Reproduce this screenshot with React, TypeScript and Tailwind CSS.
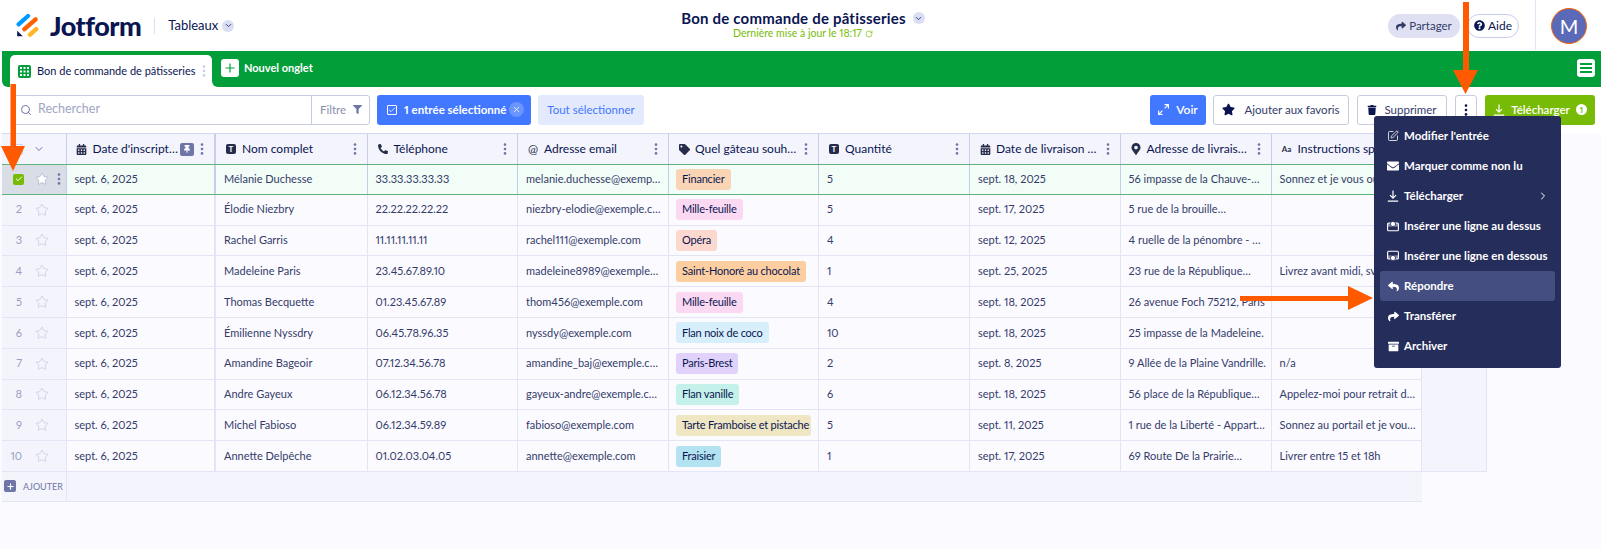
import type { ReactNode } from "react";
import { Star, Search, Check, X, ChevronDown, ChevronRight, SquarePen, Plus, RotateCw } from "lucide-react";
import {
  FaPhoneAlt,
  FaTag,
  FaMapMarkerAlt,
  FaStar,
  FaFilter,
  FaEnvelope,
  FaReply,
  FaShare,
  FaArchive,
  FaQuestionCircle,
  FaTrash,
  FaCalendarAlt,
  FaThumbtack,
} from "react-icons/fa";

const rowGrid = "grid grid-cols-[64.5px_149.5px_151.5px_150.5px_151px_150px_151px_150.5px_151px_150px]";

const Dots = ({ className = "" }: { className?: string }) => (
  <svg width="4" height="12" viewBox="0 0 4 12" className={className} fill="currentColor">
    <circle cx="2" cy="1.6" r="1.3" />
    <circle cx="2" cy="6" r="1.3" />
    <circle cx="2" cy="10.4" r="1.3" />
  </svg>
);

const DownloadIcon = ({ className = "" }: { className?: string }) => (
  <svg width="12" height="12" viewBox="0 0 12 12" className={className} fill="none" stroke="currentColor" strokeWidth="1.2">
    <path d="M6 0.5V8M3 5.2L6 8.2L9 5.2M0.8 11.2H11.2" />
  </svg>
);

const TBox = () => (
  <span className="w-[10px] h-[10px] rounded-[2px] bg-[#272c4a] text-white text-[8px] font-bold flex items-center justify-center leading-none">T</span>
);

const Cal = () => <FaCalendarAlt size={11} className="text-[#272c4a]" />;

const columns: { icon: ReactNode; label: string; pin?: boolean }[] = [
  { icon: <Cal />, label: "Date d'inscript…", pin: true },
  { icon: <TBox />, label: "Nom complet" },
  { icon: <FaPhoneAlt size={10} className="text-[#272c4a]" />, label: "Téléphone" },
  { icon: <span className="text-[12px] leading-none text-[#272c4a]">@</span>, label: "Adresse email" },
  { icon: <FaTag size={11} className="text-[#272c4a]" />, label: "Quel gâteau souh…" },
  { icon: <TBox />, label: "Quantité" },
  { icon: <Cal />, label: "Date de livraison …" },
  { icon: <FaMapMarkerAlt size={12} className="text-[#272c4a]" />, label: "Adresse de livrais…" },
  { icon: <span className="text-[8px] font-bold leading-none text-[#272c4a]">Aa</span>, label: "Instructions spéciales" },
];

type Row = [string, string, string, string, [string, string], string, string, string, string];

const rows: Row[] = [
  ["sept. 6, 2025", "Mélanie Duchesse", "33.33.33.33.33", "melanie.duchesse@exemp…", ["Financier", "bg-[#fad5b5]"], "5", "sept. 18, 2025", "56 impasse de la Chauve-…", "Sonnez et je vous ouvrirai"],
  ["sept. 6, 2025", "Élodie Niezbry", "22.22.22.22.22", "niezbry-elodie@exemple.c…", ["Mille-feuille", "bg-[#fcd9f3]"], "5", "sept. 17, 2025", "5 rue de la brouille…", ""],
  ["sept. 6, 2025", "Rachel Garris", "11.11.11.11.11", "rachel111@exemple.com", ["Opéra", "bg-[#fdd8cf]"], "4", "sept. 12, 2025", "4 ruelle de la pénombre - …", ""],
  ["sept. 6, 2025", "Madeleine Paris", "23.45.67.89.10", "madeleine8989@exemple…", ["Saint-Honoré au chocolat", "bg-[#fdcfa0]"], "1", "sept. 25, 2025", "23 rue de la République…", "Livrez avant midi, svp"],
  ["sept. 6, 2025", "Thomas Becquette", "01.23.45.67.89", "thom456@exemple.com", ["Mille-feuille", "bg-[#fcd9f3]"], "4", "sept. 18, 2025", "26 avenue Foch 75212, Paris", ""],
  ["sept. 6, 2025", "Émilienne Nyssdry", "06.45.78.96.35", "nyssdy@exemple.com", ["Flan noix de coco", "bg-[#d6effb]"], "10", "sept. 18, 2025", "25 impasse de la Madeleine.", ""],
  ["sept. 6, 2025", "Amandine Bageoir", "07.12.34.56.78", "amandine_baj@exemple.c…", ["Paris-Brest", "bg-[#e0d2fb]"], "2", "sept. 8, 2025", "9 Allée de la Plaine Vandrille.", "n/a"],
  ["sept. 6, 2025", "Andre Gayeux", "06.12.34.56.78", "gayeux-andre@exemple.c…", ["Flan vanille", "bg-[#c4f1e9]"], "6", "sept. 18, 2025", "56 place de la République…", "Appelez-moi pour retrait d…"],
  ["sept. 6, 2025", "Michel Fabioso", "06.12.34.59.89", "fabioso@exemple.com", ["Tarte Framboise et pistache", "bg-[#efe7c3]"], "5", "sept. 11, 2025", "1 rue de la Liberté - Appart…", "Sonnez au portail et je vou…"],
  ["sept. 6, 2025", "Annette Delpêche", "01.02.03.04.05", "annette@exemple.com", ["Fraisier", "bg-[#b3e2f0]"], "1", "sept. 17, 2025", "69 Route De la Prairie…", "Livrer entre 15 et 18h"],
];

const menu: { icon: ReactNode; label: string; more?: boolean; active?: boolean }[] = [
  { icon: <SquarePen size={12} strokeWidth={1.6} />, label: "Modifier l'entrée" },
  { icon: <FaEnvelope size={12} />, label: "Marquer comme non lu" },
  { icon: <DownloadIcon />, label: "Télécharger", more: true },
  {
    icon: (
      <svg width="12" height="12" viewBox="0 0 12 12" fill="none">
        <rect x="0.6" y="3" width="10.8" height="7.8" rx="1" stroke="currentColor" strokeWidth="1.1" />
        <rect x="1" y="3" width="10" height="3.6" fill="currentColor" opacity="0.45" />
        <circle cx="6" cy="4" r="2.6" fill="currentColor" stroke="#252d5b" strokeWidth="0.8" />
      </svg>
    ),
    label: "Insérer une ligne au dessus",
  },
  {
    icon: (
      <svg width="12" height="12" viewBox="0 0 12 12" fill="none">
        <rect x="0.6" y="1.2" width="10.8" height="7.8" rx="1" stroke="currentColor" strokeWidth="1.1" />
        <rect x="1" y="5.4" width="10" height="3.6" fill="currentColor" opacity="0.45" />
        <circle cx="6" cy="8" r="2.6" fill="currentColor" stroke="#252d5b" strokeWidth="0.8" />
      </svg>
    ),
    label: "Insérer une ligne en dessous",
  },
  { icon: <FaReply size={11} />, label: "Répondre", active: true },
  { icon: <FaShare size={11} />, label: "Transférer" },
  { icon: <FaArchive size={11} />, label: "Archiver" },
];

const Logo = () => (
  <svg width="24" height="24" viewBox="0 0 24 24" className="shrink-0">
    <path d="M3.6 10.4L13 2" stroke="#0099ff" strokeWidth="4.2" strokeLinecap="round" />
    <path d="M9.4 15.2L20.6 5.4" stroke="#ff6100" strokeWidth="4.4" strokeLinecap="round" />
    <path d="M15 20.6L21.2 15.2" stroke="#ffb629" strokeWidth="4.4" strokeLinecap="round" />
    <path d="M2.2 16.8V22.2H7.8Z" fill="#0a1551" />
  </svg>
);

const Header = () => (
  <header className="h-[51px] flex bg-white text-[#0a1551]">
    <div className="w-[258px] flex items-center pl-[15px]">
      <Logo />
      <span className="ml-[11px] text-[27px] font-black tracking-[-0.5px] leading-none">Jotform</span>
      <span className="ml-[13px] w-px h-[16px] bg-[#dadef3]" />
      <span className="ml-[13px] text-[13px]">Tableaux</span>
      <span className="ml-[4px] w-[12px] h-[12px] rounded-full bg-[#dadef3] flex items-center justify-center">
        <ChevronDown size={9} />
      </span>
    </div>
    <div className="flex-1 flex flex-col items-center pt-[9px]">
      <div className="flex items-center gap-[7px]">
        <span className="text-[15px] font-bold tracking-[0.2px] leading-[18px]">Bon de commande de pâtisseries</span>
        <span className="w-[12px] h-[12px] rounded-full bg-[#dadef3] flex items-center justify-center">
          <ChevronDown size={9} />
        </span>
      </div>
      <div className="flex items-center gap-[3px] text-[10.5px] leading-[13px] text-[#78bb07]">
        Dernière mise à jour le 18:17
        <RotateCw size={8} />
      </div>
    </div>
    <div className="w-[253px] flex items-center pl-[40px] text-[#343c6a]">
      <span className="w-[72px] h-[24px] rounded-full bg-[#dfe1f3] flex items-center justify-center gap-[3px] text-[11.5px]">
        <FaShare size={10} />
        Partager
      </span>
      <span className="ml-[7px] w-[52px] h-[24px] rounded-full bg-white border border-[#c8ccec] flex items-center justify-center gap-[3px] text-[12px] text-[#0a1551]">
        <FaQuestionCircle size={11} />
        Aide
      </span>
      <span className="ml-[16px] w-px h-[50px] self-start bg-[#e3e5f5]" />
      <span className="ml-[15px] w-[36px] h-[36px] rounded-full bg-[#5b6ab8] border border-[#ff6100] text-white text-[20px] flex items-center justify-center">M</span>
    </div>
  </header>
);

const TabBar = () => (
  <div className="h-[36px] flex pl-[2px]">
    <div className="w-[8px] bg-[#029e39] rounded-bl-[6px]" />
    <div className="w-[202px] bg-[#029e39] pt-[4px]">
      <div className="h-[32px] bg-white rounded-t-[5px] flex items-center pl-[8px] text-[#0a1551]">
        <svg width="13" height="13" viewBox="0 0 13 13" className="shrink-0 text-[#029e39]" fill="currentColor">
          <path d="M2 0H11A2 2 0 0 1 13 2V11A2 2 0 0 1 11 13H2A2 2 0 0 1 0 11V2A2 2 0 0 1 2 0ZM2 2V4H4V2ZM5.5 2V4H7.5V2ZM9 2V4H11V2ZM2 5.5V7.5H4V5.5ZM5.5 5.5V7.5H7.5V5.5ZM9 5.5V7.5H11V5.5ZM2 9V11H4V9ZM5.5 9V11H7.5V9ZM9 9V11H11V9Z" fillRule="evenodd" />
        </svg>
        <span className="ml-[6px] text-[11px] whitespace-nowrap">Bon de commande de pâtisseries</span>
        <Dots className="ml-[6px] text-[#c8ccec]" />
      </div>
    </div>
    <div className="flex-1 bg-[#029e39] rounded-bl-[6px] flex items-center pl-[9px] pr-[6px] pb-[2px]">
      <span className="w-[18px] h-[18px] rounded-[3px] bg-white flex items-center justify-center text-[#029e39]">
        <Plus size={14} strokeWidth={2} />
      </span>
      <span className="ml-[5px] text-[11px] font-bold text-white">Nouvel onglet</span>
      <span className="ml-auto w-[18px] h-[18px] rounded-[3px] bg-white flex flex-col items-center justify-center gap-[2px]">
        <span className="w-[12px] h-[2px] bg-[#029e39]" />
        <span className="w-[12px] h-[2px] bg-[#029e39]" />
        <span className="w-[12px] h-[2px] bg-[#029e39]" />
      </span>
    </div>
  </div>
);

const Toolbar = () => (
  <div className="h-[46px] bg-white flex items-center pl-[13px] pr-[6px] pb-[1px] text-[12.5px]">
    <div className="w-[357px] h-[30px] flex items-center bg-white border border-[#c8cce0] rounded-[3px]">
      <Search size={12} className="ml-[6px] text-[#6f76a7]" />
      <span className="ml-[6px] flex-1 text-[#a0a5c5]">Rechercher</span>
      <span className="w-[58px] h-full border-l border-[#c8cce0] flex items-center pl-[8px] gap-[7px] text-[11.5px] text-[#8a8fb0]">
        Filtre
        <FaFilter size={9} className="text-[#6f76a7]" />
      </span>
    </div>
    <div className="ml-[7px] w-[154px] h-[30px] rounded-[3px] bg-[#4277ff] text-white flex items-center pl-[10px] font-bold text-[11.5px]">
      <span className="w-[10px] h-[10px] border border-white rounded-[1px] flex items-center justify-center shrink-0">
        <Check className="w-[8px] h-[8px] shrink-0" strokeWidth={2.5} />
      </span>
      <span className="ml-[7px] whitespace-nowrap">1 entrée sélectionné</span>
      <span className="ml-[3px] w-[15px] h-[15px] rounded-full bg-[#6b95ff] flex items-center justify-center">
        <X size={9} />
      </span>
    </div>
    <div className="ml-[7px] w-[106px] h-[30px] rounded-[3px] bg-[#e3eafd] text-[#4277ff] text-[11.5px] flex items-center justify-center">Tout sélectionner</div>
    <div className="ml-auto w-[56px] h-[30px] rounded-[3px] bg-[#4277ff] text-white flex items-center justify-center gap-[7px] font-semibold text-[12px]">
      <svg width="11" height="11" viewBox="0 0 11 11" fill="none" stroke="currentColor" strokeWidth="1.1">
        <path d="M6.5 0.6H10.4V4.5M10.4 0.6L6.6 4.4M4.5 10.4H0.6V6.5M0.6 10.4L4.4 6.6" />
      </svg>
      Voir
    </div>
    <div className="ml-[7px] w-[136px] h-[30px] rounded-[3px] bg-white border border-[#c8cce0] text-[#343c6a] flex items-center justify-center gap-[9px] text-[11.5px]">
      <FaStar size={13} className="text-[#0a1551]" />
      Ajouter aux favoris
    </div>
    <div className="ml-[8px] w-[90px] h-[30px] rounded-[3px] bg-white border border-[#c8cce0] text-[#343c6a] flex items-center justify-center gap-[7px] text-[11.5px]">
      <FaTrash size={10} className="text-[#0a1551]" />
      Supprimer
    </div>
    <div className="ml-[8px] w-[22px] h-[30px] rounded-[3px] bg-white border border-[#c8cce0] flex items-center justify-center text-[#0a1551]">
      <Dots />
    </div>
    <div className="ml-[8px] w-[110px] h-[30px] rounded-[3px] bg-[#78bb07] text-white flex items-center justify-center gap-[6px] font-semibold text-[11.5px]">
      <DownloadIcon />
      Télécharger
      <span className="w-[11px] h-[11px] rounded-full bg-white text-[#78bb07] text-[8px] font-bold flex items-center justify-center">1</span>
    </div>
  </div>
);

const HeaderRow = () => (
  <div className={`${rowGrid} h-[31px] bg-[#f3f4fc] border-t border-[#d3d7ef] text-[#0a1551]`}>
    <div className="border-r border-[#c8cdea] flex items-center pl-[10px] gap-[10px]">
      <span className="w-[11px] h-[11px] bg-white border border-[#c8cdea] rounded-[2px]" />
      <ChevronDown size={12} className="text-[#6f76a7]" />
    </div>
    {columns.map((col, i) => (
      <div key={col.label} className={`flex items-center pl-[9px] pr-[10px] border-r ${i === 0 ? "border-r-2 border-[#c8cdea]" : "border-[#c8cdea]"} overflow-hidden`}>
        <span className="w-[12px] flex justify-center shrink-0">{col.icon}</span>
        <span className="ml-[5px] text-[12px] whitespace-nowrap">{col.label}</span>
        {col.pin && (
          <span className="ml-auto mr-[6px] w-[14px] h-[13px] rounded-[2px] bg-[#6f76a7] shrink-0 flex items-center justify-center text-white">
            <FaThumbtack size={8} />
          </span>
        )}
        <Dots className={`${col.pin ? "" : "ml-auto"} shrink-0 text-[#6f76a7]`} />
      </div>
    ))}
  </div>
);

const TableRow = ({ row, index }: { row: Row; index: number }) => {
  const selected = index === 0;
  const line = selected ? "border-[#c3cbe6]" : "border-[#e3e5f5]";
  return (
    <div
      className={`${rowGrid} h-[30.8px] border-b text-[11px] text-[#343c6a] ${
        selected ? "bg-[#f3fdf8] border-[#5fb37c] border-t" : "bg-[#fbfaff] border-[#e3e5f5]"
      }`}
    >
      <div className={`flex items-center border-r ${line} ${selected ? "bg-[#d8dde6]" : "bg-[#f3f4fc]"}`}>
        {selected ? (
          <>
            <span className="ml-[11px] w-[11px] h-[11px] rounded-[2px] bg-[#78bb07] flex items-center justify-center text-white">
              <Check size={8} strokeWidth={3} />
            </span>
            <Star size={14} strokeWidth={1} fill="#ffffff" className="ml-[11px] text-[#9aa0c0]" />
            <Dots className="ml-[8px] text-[#6f76a7]" />
          </>
        ) : (
          <>
            <span className="w-[20px] text-right text-[#9a9fc0]">{index + 1}</span>
            <Star size={14} strokeWidth={1} className="ml-[13px] text-[#b8bcd8]" />
          </>
        )}
      </div>
      {row.map((cell, i) =>
        Array.isArray(cell) ? (
          <div key={i} className={`min-w-0 border-r ${line} pl-[7px] pr-[7px] flex items-center`}>
            <span className={`${cell[1]} h-[21px] min-w-0 overflow-hidden rounded-[3px] pl-[6px] pr-[6px] flex items-center whitespace-nowrap text-[#0a1551] text-[11px] tracking-[-0.2px]`}>{cell[0]}</span>
          </div>
        ) : (
          <div
            key={i}
            className={`pl-[8px] flex items-center overflow-hidden whitespace-nowrap ${line} ${i === 0 ? "border-r-2 border-[#c8cdea]" : "border-r"}`}
          >
            {cell}
          </div>
        ),
      )}
    </div>
  );
};

const Table = () => (
  <div className="flex items-start pl-[2px]">
    <div className="w-[1420px]">
      <HeaderRow />
      {rows.map((row, i) => (
        <TableRow key={row[1]} row={row} index={i} />
      ))}
      <div className={`${rowGrid} h-[30px] bg-[#f3f4fc] border-b border-[#e3e5f5]`}>
        <div className="border-r border-[#e3e5f5] flex items-center pl-[2px] gap-[7px]">
          <span className="w-[12px] h-[12px] rounded-[2px] bg-[#6f76a7] text-white flex items-center justify-center">
            <Plus size={9} strokeWidth={3} />
          </span>
          <span className="text-[9px] text-[#6f76a7]">AJOUTER</span>
        </div>
      </div>
    </div>
    <div className="w-[65px] h-[339px] bg-[#f3f4fc] border-r border-b border-[#e3e5f5]" />
  </div>
);

const ActionMenu = () => (
  <div className="absolute left-[1374px] top-[116px] w-[187px] h-[252px] rounded-[3px] bg-[#252d5b] text-white pt-[5px] px-[6px]">
    {menu.map((item) => (
      <div
        key={item.label}
        className={`h-[30px] pl-[7px] flex items-center gap-[6px] rounded-[3px] text-[11.5px] font-bold whitespace-nowrap ${item.active ? "bg-[#454e80]" : ""}`}
      >
        <span className="w-[12px] flex justify-center shrink-0">{item.icon}</span>
        <span className="ml-[-1px]">{item.label}</span>
        {item.more && <ChevronRight size={12} className="ml-auto mr-[6px]" />}
      </div>
    ))}
  </div>
);

export default function App() {
  return (
    <div className="relative w-[1601px] h-[549px] overflow-hidden bg-[#fbfaff] font-['Lato','Noto_Sans',sans-serif] [font-variant-numeric:proportional-nums]">
      <Header />
      <TabBar />
      <Toolbar />
      <Table />
      <ActionMenu />
      {/* flèches d'annotation */}
      <svg className="absolute left-[0px] top-[84px]" width="26" height="88" viewBox="0 0 26 88" fill="#ff5a00">
        <path d="M10.5 0H16V62H25L13 87L1 62H10.5Z" />
      </svg>
      <svg className="absolute left-[1452px] top-[0px]" width="27" height="95" viewBox="0 0 27 95" fill="#ff5a00">
        <path d="M11 2H17V70H26L13.5 94L1 70H11Z" />
      </svg>
      <svg className="absolute left-[1240px] top-[285px]" width="134" height="26" viewBox="0 0 134 26" fill="#ff5a00">
        <path d="M0 11H108V1L133 13L108 25V16H0Z" />
      </svg>
    </div>
  );
}
